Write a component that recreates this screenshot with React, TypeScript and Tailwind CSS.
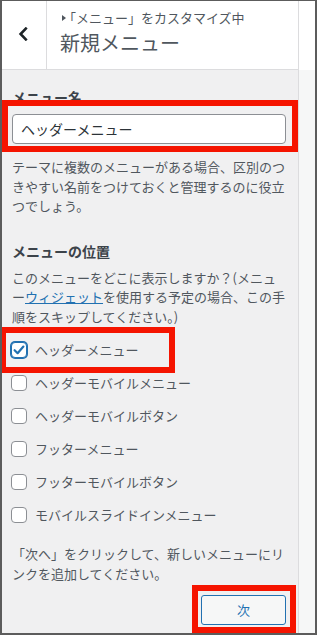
import React from 'react';

const locations = [
  'ヘッダーメニュー',
  'ヘッダーモバイルメニュー',
  'ヘッダーモバイルボタン',
  'フッターメニュー',
  'フッターモバイルボタン',
  'モバイルスライドインメニュー',
];

const Checkbox = ({ checked }: { checked?: boolean }) =>
  checked ? (
    <span className="flex h-[16px] w-[16px] shrink-0 items-center justify-center rounded-[4px] border border-[#2271b1] bg-white shadow-[0_0_0_1px_#2271b1]">
      <svg width="14" height="14" viewBox="0 0 14 14" fill="none">
        <path d="M2.6 7.2 L5.6 10.2 L11.4 3.6" stroke="#2271b1" strokeWidth="2.2" strokeLinecap="round" strokeLinejoin="round" />
      </svg>
    </span>
  ) : (
    <span className="h-[16px] w-[16px] shrink-0 rounded-[4px] border border-[#8c8f94] bg-white" />
  );

export default function App() {
  return (
    <div className="relative flex h-[635px] w-[317px] overflow-hidden border-b-2 border-l-2 border-r-2 border-t border-[#5c5c5c] bg-white font-['Noto_Sans_CJK_JP','Noto_Sans',sans-serif]">
      <div className="flex w-[296px] shrink-0 flex-col bg-[#f0f0f1]">
        <header className="flex h-[69px] shrink-0 border-b border-[#dcdcde] bg-white">
          <button className="flex w-[45px] shrink-0 items-center justify-center border-r border-[#dcdcde] pb-[3px] pr-[3px]">
            <svg width="10" height="14" viewBox="0 0 10 14" fill="none">
              <path d="M7.8 1.6 L2.6 7 L7.8 12.4" stroke="#1d2327" strokeWidth="2.6" strokeLinecap="square" />
            </svg>
          </button>
          <div className="flex flex-col pl-[13px] pt-[8px]">
            <div className="flex items-center text-[13px] leading-[18px] text-[#50575e]">
              <svg width="4" height="6" viewBox="0 0 4 6" className="ml-[2px]">
                <path d="M0 0 L4 3 L0 6 Z" fill="#50575e" />
              </svg>
              <span className="ml-[-3px]">「メニュー」をカスタマイズ中</span>
            </div>
            <h2 className="mt-[2px] text-[20px] leading-[28px] text-[#50575e]">新規メニュー</h2>
          </div>
        </header>

        <div className="flex flex-col pl-[10px] pr-[12px] pt-[17px]">
          <label className="text-[14px] font-bold leading-[20px] text-[#3c434a]">メニュー名</label>
          <div className="mt-[7px] flex h-[30px] items-center rounded-[4px] border border-[#8c8f94] bg-white px-[8px] text-[14px] text-[#2c3338]">
            ヘッダーメニュー
          </div>
          <p className="mt-[13px] text-[13px] leading-[19.5px] text-[#50575e]">
            テーマに複数のメニューがある場合、区別のつきやすい名前をつけておくと管理するのに役立つでしょう。
          </p>

          <h3 className="mt-[25px] text-[14px] font-bold leading-[20px] text-[#3c434a]">メニューの位置</h3>
          <p className="mt-[7px] text-[13px] leading-[19.5px] text-[#50575e]">
            このメニューをどこに表示しますか？(メニュー<a className="text-[#2271b1] underline">ウィジェット</a>を使用する予定の場合、この手順をスキップしてください。)
          </p>

          <ul className="mt-[7px] flex flex-col">
            {locations.map((name, i) => (
              <li key={name} className="ml-[-1px] flex h-[33px] items-center gap-[8px] text-[13px] text-[#50575e]">
                <Checkbox checked={i === 0} />
                <span>{name}</span>
              </li>
            ))}
          </ul>

          <p className="mt-[13px] text-[13px] leading-[19.5px] text-[#50575e]">
            「次へ」をクリックして、新しいメニューにリンクを追加してください。
          </p>
          <button className="ml-auto mt-[12px] flex h-[30px] w-[85px] items-center justify-center rounded-[3px] border border-[#2271b1] bg-[#f6f7f7] text-[13px] text-[#2271b1]">
            次
          </button>
        </div>
      </div>

      <div className="flex flex-1 flex-col border-l border-[#dcdcde]">
        <div className="h-[69px] bg-white" />
        <div className="flex-1 bg-[#f6f7f7]" />
      </div>

      {/* annotation boxes */}
      <div className="pointer-events-none absolute left-0 top-[99px] h-[52px] w-[296px] border-[6px] border-[#f51400]" />
      <div className="pointer-events-none absolute left-[-2px] top-[326px] h-[46px] w-[175px] border-[6px] border-[#f51400]" />
      <div className="pointer-events-none absolute left-[190px] top-[584px] h-[48px] w-[104px] border-[6px] border-[#f51400]" />
    </div>
  );
}
